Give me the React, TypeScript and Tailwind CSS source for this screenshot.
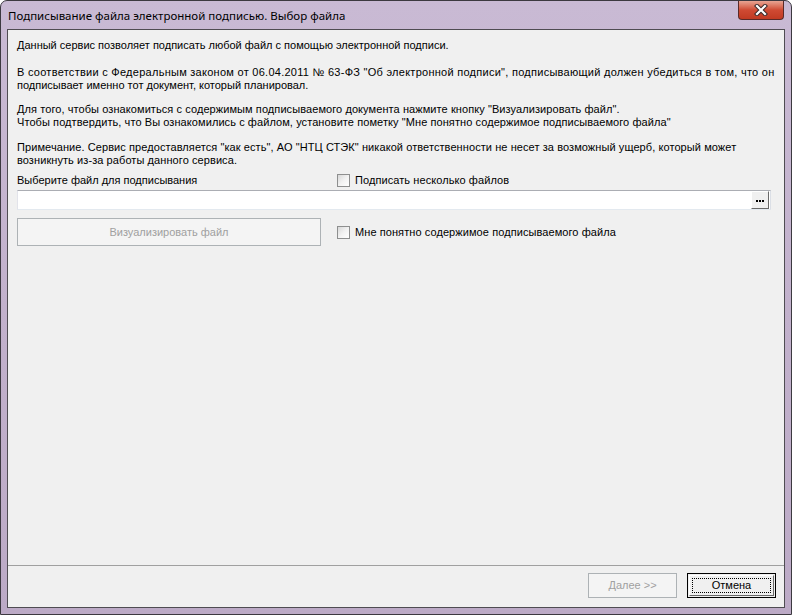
import React from "react";

const body = { fontFamily: '"Liberation Sans", Arial, sans-serif' };

function CheckBox({ label }: { label: string }) {
  return (
    <div className="flex items-center gap-[5px]">
      <div className="h-[13px] w-[13px] border border-[#8e8f8f] bg-gradient-to-br from-[#d8d8d8] via-[#f2f2f2] to-white" />
      <span className="leading-[13px] tracking-[0.08px]">{label}</span>
    </div>
  );
}

function CloseGlyph() {
  return (
    <svg width="14" height="12" viewBox="0 0 14 12">
      <path d="M3 2 L11 10 M11 2 L3 10" stroke="#3b2a2a" strokeWidth="4.2" strokeLinecap="square" />
      <path d="M3 2 L11 10 M11 2 L3 10" stroke="#ffffff" strokeWidth="2.2" strokeLinecap="square" />
    </svg>
  );
}

export default function App() {
  return (
    <div
      className="relative flex h-[615px] w-[792px] flex-col overflow-hidden rounded-t-[7px] border border-[#3c3940] bg-gradient-to-b from-[#c9bad4] via-[#c2b1cc] to-[#bcaac6]"
      style={body}
    >
      <div className="flex h-[28px] shrink-0 items-center pl-[7px] pt-[1px]">
        <span className="text-[11.5px] text-black" style={{ fontFamily: '"Noto Sans", "Liberation Sans", sans-serif' }}>
          Подписывание файла электронной подписью. Выбор файла
        </span>
      </div>
      <div className="absolute right-[7px] top-0 flex h-[19px] w-[46px] items-center justify-center rounded-b-[4px] border border-t-0 border-[#5a2a28] bg-gradient-to-b from-[#e8a493] via-[#cf4a33] to-[#c13a22]">
        <CloseGlyph />
      </div>

      <div className="mx-[6px] mb-[6px] flex flex-1 flex-col border border-[#4f4c52] bg-[#f0f0f0] text-[11px] text-black">
        <div className="flex flex-1 flex-col pl-[9px] pr-[13px] pt-[9px]">
          <p className="whitespace-nowrap leading-[13px]">
            Данный сервис позволяет подписать любой файл с помощью электронной подписи.
          </p>
          <p className="mt-[14px] whitespace-nowrap leading-[13px]">
            <span className="tracking-[0.27px]">
              В соответствии с Федеральным законом от 06.04.2011 № 63-ФЗ "Об электронной подписи", подписывающий должен убедиться в том, что он
            </span>
            <br />
            подписывает именно тот документ, который планировал.
          </p>
          <p className="mt-[11px] whitespace-nowrap leading-[13px] tracking-[0.08px]">
            Для того, чтобы ознакомиться с содержимым подписываемого документа нажмите кнопку "Визуализировать файл".
            <br />
            Чтобы подтвердить, что Вы ознакомились с файлом, установите пометку "Мне понятно содержимое подписываемого файла"
          </p>
          <p className="mt-[12px] whitespace-nowrap leading-[13px] tracking-[0.08px]">
            Примечание. Сервис предоставляется "как есть", АО "НТЦ СТЭК" никакой ответственности не несет за возможный ущерб, который может
            <br />
            возникнуть из-за работы данного сервиса.
          </p>

          <div className="mt-[7px] flex h-[13px] items-center">
            <span className="w-[320px] leading-[13px]">Выберите файл для подписывания</span>
            <CheckBox label="Подписать несколько файлов" />
          </div>

          <div className="mt-[3px] flex h-[20px] items-center border border-[#abadb3] border-b-[#e3e9ef] border-l-[#e2e3ea] border-r-[#dbdfe6] bg-white pr-[1px]">
            <div className="flex-1" />
            <div className="flex h-[18px] w-[18px] items-center justify-center gap-[1px] border border-white border-b-[#696969] border-r-[#696969] bg-[#f0f0f0] pt-[2px]">
              <div className="h-[2px] w-[2px] bg-black" />
              <div className="h-[2px] w-[2px] bg-black" />
              <div className="h-[2px] w-[2px] bg-black" />
            </div>
          </div>

          <div className="mt-[8px] flex items-center">
            <div className="flex h-[28px] w-[304px] items-center justify-center border border-[#adb2b5] bg-[#f4f4f4] text-[#a0a0a0]">
              Визуализировать файл
            </div>
            <div className="ml-[16px]">
              <CheckBox label="Мне понятно содержимое подписываемого файла" />
            </div>
          </div>
        </div>

        <div className="flex h-[42px] shrink-0 items-start justify-end gap-[10px] border-t border-[#a0a0a0] pr-[8px] pt-[7px]">
          <div className="flex h-[25px] w-[89px] items-center justify-center border border-[#adb2b5] bg-[#f4f4f4] text-[#a0a0a0]">
            Далее &gt;&gt;
          </div>
          <div className="h-[25px] w-[89px] border border-black bg-[#f0f0f0] p-[1px]">
            <div className="h-full w-full border border-white border-b-[#696969] border-r-[#696969] p-[2px]">
              <div className="flex h-full w-full items-center justify-center border border-dotted border-black">
                Отмена
              </div>
            </div>
          </div>
        </div>
      </div>
    </div>
  );
}
